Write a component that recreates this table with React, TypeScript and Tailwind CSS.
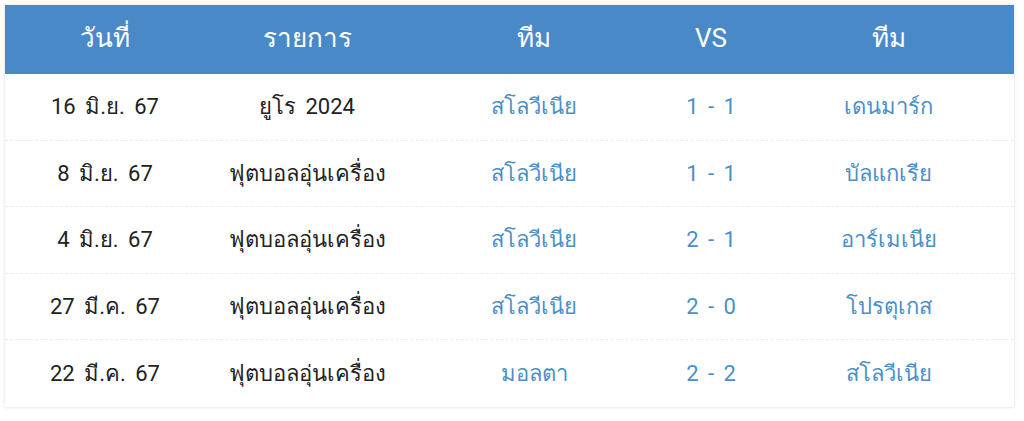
const rows = [
  { date: "16 มิ.ย. 67", event: "ยูโร 2024", home: "สโลวีเนีย", score: "1 - 1", away: "เดนมาร์ก" },
  { date: "8 มิ.ย. 67", event: "ฟุตบอลอุ่นเครื่อง", home: "สโลวีเนีย", score: "1 - 1", away: "บัลแกเรีย" },
  { date: "4 มิ.ย. 67", event: "ฟุตบอลอุ่นเครื่อง", home: "สโลวีเนีย", score: "2 - 1", away: "อาร์เมเนีย" },
  { date: "27 มี.ค. 67", event: "ฟุตบอลอุ่นเครื่อง", home: "สโลวีเนีย", score: "2 - 0", away: "โปรตุเกส" },
  { date: "22 มี.ค. 67", event: "ฟุตบอลอุ่นเครื่อง", home: "มอลตา", score: "2 - 2", away: "สโลวีเนีย" },
];

export default function App() {
  return (
    <div className="w-[1024px] h-[421px] bg-white pt-[5px] px-[5px]" style={{ fontFamily: "Roboto, 'Noto Sans', sans-serif" }}>
      <div className="w-[1009px] bg-white shadow-[0_0_3px_rgba(0,0,0,0.15)]">
        {/* Header */}
        <div className="grid grid-cols-[200px_204px_250px_104px_251px] h-[69px] items-center bg-[#4a89c8] text-white text-[26px] pb-[2px]">
          <div className="text-center">วันที่</div>
          <div className="text-center">รายการ</div>
          <div className="text-center">ทีม</div>
          <div className="text-center">VS</div>
          <div className="text-center">ทีม</div>
        </div>

        {/* Rows */}
        {rows.map((r, i) => (
          <div
            key={i}
            className={
              "grid grid-cols-[200px_204px_250px_104px_251px] h-[66.6px] items-center text-[22px] [word-spacing:4px] " +
              (i < rows.length - 1 ? "border-b border-dashed border-[#ececec]" : "")
            }
          >
            <div className="text-center text-[#222]">{r.date}</div>
            <div className="text-center text-[#222]">{r.event}</div>
            <div className="text-center text-[#4a8fc8]">{r.home}</div>
            <div className="text-center text-[#4a8fc8]">{r.score}</div>
            <div className="text-center text-[#4a8fc8]">{r.away}</div>
          </div>
        ))}
      </div>
    </div>
  );
}
